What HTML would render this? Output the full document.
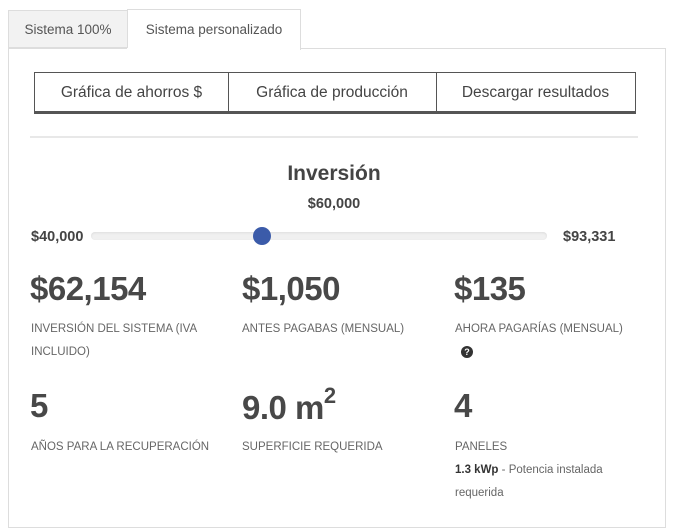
<!DOCTYPE html>
<html><head><meta charset="utf-8"><style>
body{margin:0;width:674px;height:521px;background:#fff;font-family:"Liberation Sans",sans-serif;color:#444;position:relative;overflow:hidden}
.a{position:absolute}
.tab{position:absolute;font-size:13.5px;color:#555;text-align:center;box-sizing:border-box}
.big{position:absolute;font-size:33px;font-weight:bold;color:#484848;letter-spacing:-0.5px}
.lbl{position:absolute;font-size:11.5px;color:#666;line-height:23px}
.btn{position:absolute;top:72px;height:42px;box-sizing:border-box;border:1px solid #555;border-bottom:3px solid #555;font-size:15.5px;color:#444;display:flex;align-items:center;justify-content:center;padding-top:2px}
</style></head><body>
<div class="tab" style="left:8px;top:10px;width:120px;height:38px;background:#f2f2f2;border:1px solid #ddd;line-height:37px">Sistema 100%</div>
<div class="tab" style="left:127px;top:9px;width:174px;height:41px;background:#fff;border:1px solid #ddd;border-bottom:none;line-height:40px">Sistema personalizado</div>
<div class="a" style="left:8px;top:48px;width:658px;height:480px;border:1px solid #ddd;box-sizing:border-box"></div>
<div class="a" style="left:127px;top:48px;width:173px;height:2px;background:#fff"></div>
<div class="btn" style="left:34px;width:195px">Gráfica de ahorros $</div>
<div class="btn" style="left:228px;width:209px;border-left:none">Gráfica de producción</div>
<div class="btn" style="left:436px;width:200px;border-left:none">Descargar resultados</div>
<div class="a" style="left:30px;top:136px;width:608px;height:2px;background:#e8e8e8"></div>
<div class="a" style="left:0;width:668px;top:162px;text-align:center;font-size:21px;font-weight:bold;color:#444">Inversión</div>
<div class="a" style="left:0;width:668px;top:196px;text-align:center;font-size:14.5px;font-weight:bold;color:#444">$60,000</div>
<div class="a" style="left:31px;top:229px;font-size:14.5px;font-weight:bold">$40,000</div>
<div class="a" style="left:563px;top:229px;font-size:14.5px;font-weight:bold">$93,331</div>
<div class="a" style="left:91px;top:232px;width:456px;height:8px;border-radius:4px;background:#f0f0f0;box-shadow:inset 0 1px 2px #ddd"></div>
<div class="a" style="left:253px;top:227px;width:18px;height:18px;border-radius:50%;background:#3b5ba9"></div>
<div class="big" style="left:30px;top:270px">$62,154</div>
<div class="big" style="left:242px;top:270px">$1,050</div>
<div class="big" style="left:454px;top:270px">$135</div>
<div class="lbl" style="left:31px;top:318px">INVERSIÓN DEL SISTEMA (IVA<br>INCLUIDO)</div>
<div class="lbl" style="left:242px;top:318px">ANTES PAGABAS (MENSUAL)</div>
<div class="lbl" style="left:455px;top:318px">AHORA PAGARÍAS (MENSUAL)</div>
<div class="a" style="left:461px;top:346px;width:12px;height:12px;border-radius:50%;background:#333;color:#fff;font-size:9px;font-weight:bold;text-align:center;line-height:12px">?</div>
<div class="big" style="left:30px;top:387px">5</div>
<div class="big" style="left:242px;top:387px">9.0 m<sup style="font-size:22px;position:relative;top:-4px">2</sup></div>
<div class="big" style="left:454px;top:387px">4</div>
<div class="lbl" style="left:31px;top:436px">AÑOS PARA LA RECUPERACIÓN</div>
<div class="lbl" style="left:242px;top:436px">SUPERFICIE REQUERIDA</div>
<div class="lbl" style="left:455px;top:436px">PANELES<br><b style="color:#333">1.3 kWp</b> - Potencia instalada<br>requerida</div>
</body></html>
